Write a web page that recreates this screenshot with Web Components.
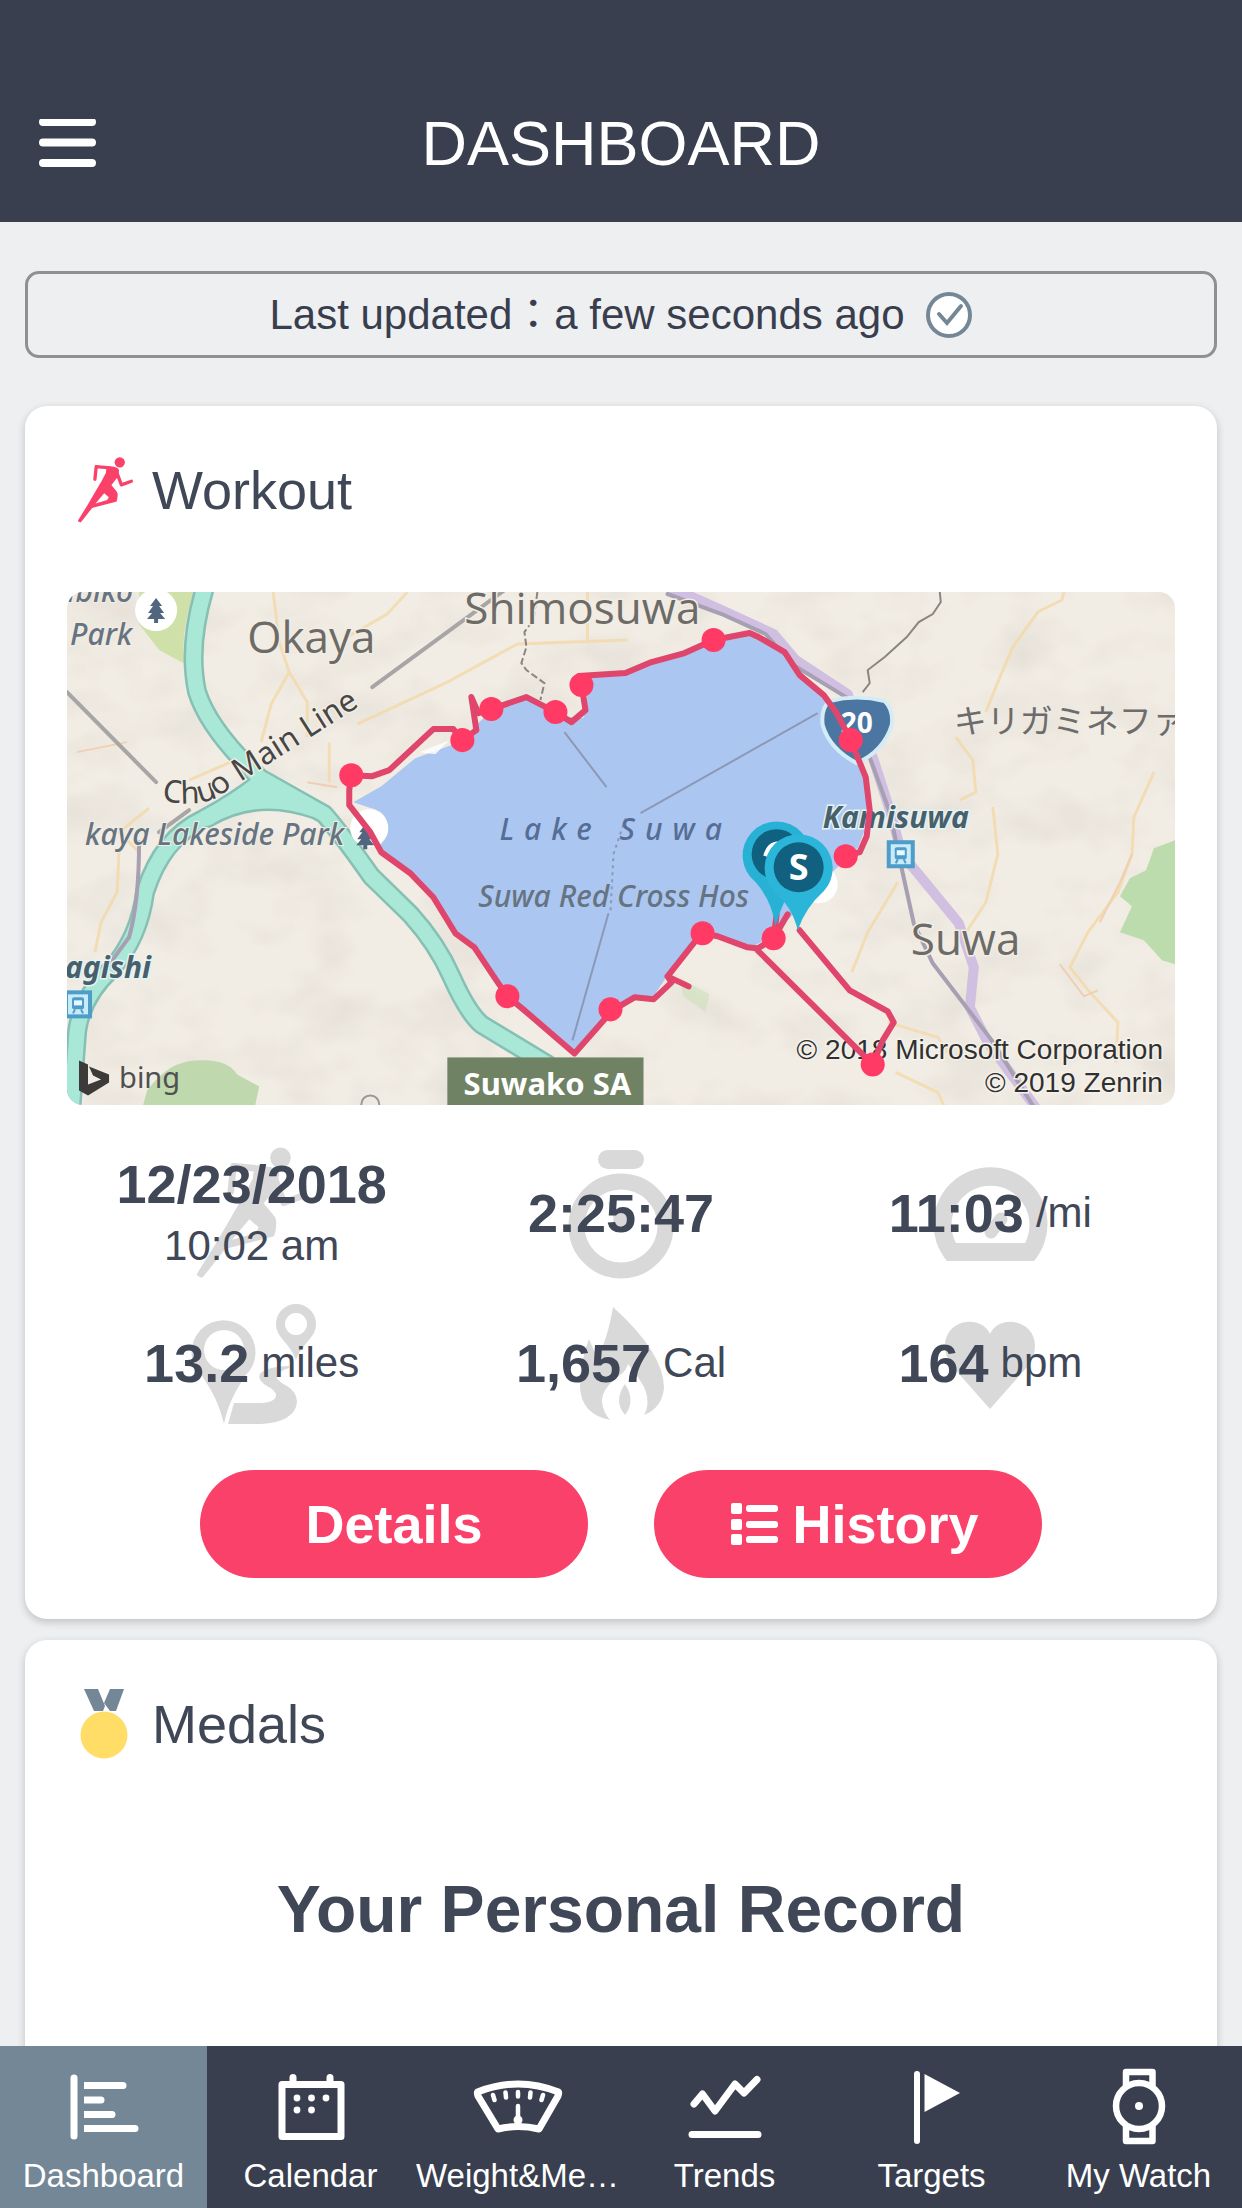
<!DOCTYPE html>
<html lang="en">
<head>
<meta charset="utf-8">
<meta name="viewport" content="width=device-width, initial-scale=1">
<title>Dashboard</title>
<style>
  body {
    margin: 0;
    background: #eeeff1;
    color: #404757;
    font-family: "Liberation Sans", "Noto Sans CJK JP", sans-serif;
  }
</style>
</head>
<body>
<dash-app>
  <dash-header slot="header">DASHBOARD</dash-header>
  <sync-status>Last updated：a few seconds ago</sync-status>
  <dash-card>
    <dash-icon slot="icon" name="runner"></dash-icon>
    <span slot="title">Workout</span>
    <route-map></route-map>
    <stat-grid>
      <stat-cell icon="runner">12/23/2018<span slot="sub">10:02 am</span></stat-cell>
      <stat-cell icon="stopwatch">2:25:47</stat-cell>
      <stat-cell icon="gauge">11:03<span slot="unit">/mi</span></stat-cell>
      <stat-cell icon="route">13.2<span slot="unit">miles</span></stat-cell>
      <stat-cell icon="flame">1,657<span slot="unit">Cal</span></stat-cell>
      <stat-cell icon="heart">164<span slot="unit">bpm</span></stat-cell>
    </stat-grid>
    <button-row>
      <pill-button>Details</pill-button>
      <pill-button icon="list">History</pill-button>
    </button-row>
  </dash-card>
  <dash-card>
    <dash-icon slot="icon" name="medal"></dash-icon>
    <span slot="title">Medals</span>
    <record-heading>Your Personal Record</record-heading>
  </dash-card>
  <tab-bar slot="footer">
    <tab-item icon="dashboard" active>Dashboard</tab-item>
    <tab-item icon="calendar">Calendar</tab-item>
    <tab-item icon="scale">Weight&amp;Me…</tab-item>
    <tab-item icon="trends">Trends</tab-item>
    <tab-item icon="flag">Targets</tab-item>
    <tab-item icon="watch">My Watch</tab-item>
  </tab-bar>
</dash-app>

<script>
const ICONS = {
  runner: ['0 0 172 205', `
    <g fill="currentColor" stroke="currentColor" stroke-linejoin="round" stroke-linecap="round">
      <circle cx="129" cy="19" r="15.5" stroke="none"/>
      <path fill="none" stroke-width="10" d="M54 70 58 32 100 36M118 44 134 87 164 76"/>
      <path stroke-width="6" d="M92 36Q116 32 124 43L120 62 100 88 118 110Q122 116 117 135L44 154 10 197 6 195 34 150 76 78 90 52Z"/>
    </g>
    <path fill="#fff" d="M82 112 96 124 91 133 56 143Z"/>`],
  medal: ['0 0 57 70', `
    <path fill="#738796" d="M7 0H21L28 17 26 22H17ZM33 0H47L39 22H33L27 14Z"/>
    <circle cx="27" cy="46" r="23.5" fill="#ffdd67"/>`],
  stopwatch: ['0 0 150 150', `
    <g fill="currentColor"><rect x="52" y="12" width="46" height="19" rx="9.5"/>
    <circle cx="75" cy="88" r="44.5" fill="none" stroke="currentColor" stroke-width="16"/>
    <circle cx="75" cy="84" r="8"/><path d="M62 64 82 79 71 90Z"/></g>`],
  gauge: ['0 0 150 150', `
    <path fill="currentColor" fill-rule="evenodd" d="M32 123A57 57 0 1 1 119 123ZM41 105H110A39 39 0 1 0 41 105Z"/>
    <path stroke="currentColor" stroke-width="13" stroke-linecap="round" d="M76 94 86 81"/>`],
  route: ['0 0 150 150', `
    <g fill="currentColor"><path fill-rule="evenodd" d="M47 136C42 116 36 104 25 88A32 32 0 1 1 68 88C58 104 51 116 47 136ZM47 42A20 20 0 1 0 47 82A20 20 0 1 0 47 42Z"/>
    <path fill-rule="evenodd" d="M119 72C115 61 108 55 103 48A20 20 0 1 1 135 48C130 55 123 61 119 72ZM119 25A11 11 0 1 0 119 47A11 11 0 1 0 119 25Z"/>
    <path d="M51 136 57 115H84Q99 114 99 107Q98 102 90 98Q80 92 83 86Q88 79 112 78V80Q99 84 100 90Q102 94 110 98Q120 104 120 114Q118 134 84 136Z"/></g>`],
  flame: ['0 0 150 150', `
    <g fill="currentColor"><path d="M67 19Q118 65 118 100Q116 120 98 127Q105 115 98 99Q92 88 82 76Q80 83 74 87Q55 101 56 114Q57 124 64 132Q35 126 34 99Q34 73 43 51Q48 63 51 69Q61 54 67 19Z"/>
    <path d="M79 96Q90 113 79 127Q67 113 79 96Z"/></g>`],
  heart: ['0 0 150 150', `
    <path fill="currentColor" d="M75 121 37 78Q30 68 30 58C30 31 66 26 75 46C84 26 120 31 120 58Q120 68 113 78Z"/>`],
  list: ['0 0 48 44', `
    <g fill="currentColor"><rect width="11" height="11" y="1" rx="2"/><rect width="11" height="11" y="17" rx="2"/><rect width="11" height="11" y="32" rx="2"/>
    <rect x="15" y="3" width="32" height="7" rx="3"/><rect x="15" y="19" width="32" height="7" rx="3"/><rect x="15" y="34" width="32" height="7" rx="3"/></g>`],
  check: ['0 0 48 48', `
    <circle cx="24" cy="24" r="21" fill="#fff" stroke="currentColor" stroke-width="4"/>
    <path fill="none" stroke="currentColor" stroke-width="4" stroke-linecap="round" d="M14 23 22 32 36 15"/>`],
  menu: ['0 0 58 48', `
    <path stroke="currentColor" stroke-width="8" stroke-linecap="round" d="M5 3H54M5 23.500H54M5 44H54"/>`],
  dashboard: ['0 0 100 100', `
    <path fill="none" stroke="currentColor" stroke-width="7" stroke-linecap="round" d="M20 22V80"/>
    <path fill="currentColor" d="M30 26H69a3.500 3.500 0 0 1 0 7H30ZM30 40.500H47a3.500 3.500 0 0 1 0 7H30ZM30 55H58a3.500 3.500 0 0 1 0 7H30ZM30 69H81a3.500 3.500 0 0 1 0 7H30Z"/>`],
  calendar: ['0 0 100 100', `
    <rect x="21" y="28.500" width="59" height="52" fill="none" stroke="currentColor" stroke-width="7" stroke-linejoin="round"/>
    <path stroke="currentColor" stroke-width="7" stroke-linecap="round" d="M32 21.500V27M69 21.500V27"/>
    <g fill="currentColor"><circle cx="36" cy="42" r="3.400"/><circle cx="50.500" cy="42" r="3.400"/><circle cx="65" cy="42" r="3.400"/><circle cx="36" cy="54" r="3.400"/><circle cx="50.500" cy="54" r="3.400"/></g>`],
  scale: ['0 0 100 100', `
    <g fill="none" stroke="currentColor" stroke-linecap="round" stroke-linejoin="round">
    <path stroke-width="7" d="M9.500 36Q50 20 90.500 36Q91 38 90 40L71 73Q50 68 30 73L10 40Q9 38 9.500 36Z"/>
    <path stroke-width="4.500" d="M25 39 26.500 44M37.500 36.500 38 41.500M50 36V40.500M62.500 36.500 62 41.500M75 39 73.500 44M50 50V64"/></g>
    <circle cx="50" cy="64" r="4.500" fill="currentColor"/>`],
  trends: ['0 0 100 100', `
    <path fill="none" stroke="currentColor" stroke-width="7" stroke-linecap="round" stroke-linejoin="round" d="M19 48 27.500 38 40 55 60 28 69 37 82 23.500M17 78.500H83"/>`],
  flag: ['0 0 100 100', `
    <path stroke="currentColor" stroke-width="6" stroke-linecap="round" d="M35 18V85"/>
    <path fill="currentColor" d="M42.500 18 78 37 42.500 56Z"/>`],
  watch: ['0 0 100 100', `
    <g fill="none" stroke="currentColor" stroke-width="6.500"><circle cx="50" cy="50" r="23"/>
    <path stroke-linejoin="round" d="M37 32V16H63.500V32M37 68V85H63.500V68"/></g>
    <circle cx="50" cy="50" r="4" fill="currentColor"/>`]
};

/* Registers an element whose shadow root is filled from render(host). */
const define = (tag, render) => customElements.define(tag, class extends HTMLElement {
  connectedCallback() {
    if (!this.shadowRoot) this.attachShadow({ mode: 'open' }).innerHTML = render(this);
  }
});

define('dash-icon', el => {
  const [box, art] = ICONS[el.getAttribute('name')];
  return `<style>
    :host { display: block; }
    svg { display: block; width: 100%; height: 100%; }
  </style><svg viewBox="${box}" aria-hidden="true">${art}</svg>`;
});

define('dash-app', () => `<style>
    :host { display: flex; flex-direction: column; height: 100vh; }
    main { flex: 1; min-height: 0; overflow-y: auto; scrollbar-width: none; display: flex; flex-direction: column; padding: 49px 25px 0; }
  </style>
  <slot name="header"></slot><main><slot></slot></main><slot name="footer"></slot>`);

define('dash-header', () => `<style>
    :host { display: block; background: #393f4f; color: #fff; }
    header { display: grid; grid-template-columns: 1fr auto 1fr; align-items: center; height: 102px; padding: 92px 38px 28px; }
    button { justify-self: start; padding: 0; border: 0; background: none; color: inherit; }
    dash-icon { width: 58px; height: 48px; }
    h1 { margin: 0; font-size: 63px; line-height: 72px; font-weight: 400; }
  </style>
  <header><button type="button" aria-label="Menu"><dash-icon name="menu"></dash-icon></button><h1><slot></slot></h1></header>`);

define('sync-status', () => `<style>
    :host { display: flex; flex: none; align-items: center; justify-content: center; gap: 20px; box-sizing: border-box;
      height: 87px; margin-bottom: 48px; border: 3px solid #8f9092; border-radius: 14px; color: #393e4e; font-size: 42px; line-height: 48px; }
    dash-icon { width: 48px; height: 48px; color: #738796; }
  </style><span><slot></slot></span><dash-icon name="check"></dash-icon>`);

define('dash-card', () => `<style>
    :host { display: block; flex: none; margin-bottom: 21px; padding: 49px 42px 41px; border-radius: 22px; background: #fff; box-shadow: 0 3px 8px rgba(0,0,0,.2); }
    header { display: flex; align-items: center; gap: 18px; padding-left: 10px; margin-bottom: 67px; }
    ::slotted([slot=icon]) { width: 57px; height: 70px; color: #fa4169; }
    h2 { margin: 0; font-size: 54px; line-height: 62px; font-weight: 400; }
  </style>
  <header><slot name="icon"></slot><h2><slot name="title"></slot></h2></header><slot></slot>`);

define('stat-grid', () => `<style>
    :host { display: grid; grid-template-columns: repeat(3, 1fr); grid-auto-rows: 150px; margin: 33px 0 32px; }
  </style><slot></slot>`);

define('stat-cell', el => `<style>
    :host { display: grid; place-items: center; }
    dash-icon, div { grid-area: 1 / 1; }
    dash-icon { width: 150px; height: 150px; color: #d9d9d9; }
    dash-icon[name=runner] { width: 114px; height: 136px; }
    div { z-index: 1; text-align: center; }
    p { display: flex; align-items: center; justify-content: center; gap: 12px; margin: 0; }
    b { font-size: 54px; line-height: 66px; }
    slot[name] { font-size: 42px; line-height: 58px; }
  </style>
  <dash-icon name="${el.getAttribute('icon')}"></dash-icon>
  <div><p><b><slot></slot></b><slot name="unit"></slot></p><slot name="sub"></slot></div>`);

define('button-row', () => `<style>
    :host { display: flex; justify-content: center; gap: 66px; }
  </style><slot></slot>`);

define('pill-button', el => {
  const icon = el.getAttribute('icon');
  return `<style>
    :host { display: block; width: 388px; }
    button { display: flex; align-items: center; justify-content: center; gap: 13px; width: 100%; height: 108px; padding: 0;
      border: 0; border-radius: 54px; background: #fa4169; color: #fff; font: bold 54px/62px "Liberation Sans", sans-serif; }
    .with-icon { padding-left: 14px; }
    dash-icon { width: 48px; height: 44px; }
  </style>
  <button type="button" class="${icon ? 'with-icon' : ''}">${icon ? `<dash-icon name="${icon}"></dash-icon>` : ''}<span><slot></slot></span></button>`;
});

define('record-heading', () => `<style>
    :host { display: block; margin: -24px 0 240px; padding-top: 68px; text-align: center; }
    h3 { margin: 0; font-size: 66px; line-height: 78px; }
  </style><h3><slot></slot></h3>`);

define('tab-bar', () => `<style>
    :host { display: block; background: #393f4f; }
    nav { display: grid; grid-template-columns: repeat(6, 1fr); }
  </style><nav><slot></slot></nav>`);

define('tab-item', el => `<style>
    :host { display: block; color: #fff; }
    :host([active]) { background: #738796; }
    a { display: flex; flex-direction: column; align-items: center; padding: 10px 0 12px; color: inherit; text-decoration: none; font-size: 33px; line-height: 40px; white-space: nowrap; }
    dash-icon { width: 100px; height: 100px; }
  </style>
  <a href="#"><dash-icon name="${el.getAttribute('icon')}"></dash-icon><span><slot></slot></span></a>`);

define('route-map', () => {
  const stops = [[284,183],[395,148],[424,117],[488,120],[514,93],[646,48],[783,148],[778,264],[706,346],[635,341],[805,472],[543,417],[440,404]];
  const canal = 'M138-5Q120 54 130 100Q142 138 193 186L257 222Q276 244 304 284L343 322Q370 352 384 384Q400 420 414 432L480 472M193 190Q168 210 136 227Q95 246 78 300Q72 345 45 376Q14 405 10 440L4 520M140 226Q190 196 250 218';
  const station = (x, y) => `<g transform="translate(${x} ${y})"><rect x="-12" y="-12" width="24" height="24" fill="#c9ebf8" stroke="#4d9cca" stroke-width="4"/><rect x="-6" y="-7" width="12" height="12" rx="2" fill="#4d9cca"/><rect x="-4" y="-4" width="8" height="5" fill="#e8f8ff"/><path stroke="#4d9cca" stroke-width="2" d="M-5 9-3 5M5 9 3 5"/></g>`;
  const tree = 'M0-12 6-4H3L8 3H4L9 9H2V13H-2V9H-9L-4 3H-8L-3-4H-6Z';
  return `<style>
    :host { display: block; }
    svg { display: block; width: 100%; height: auto; border-radius: 16px; }
    text { font-family: "Noto Sans", "Open Sans", sans-serif; }
    .town { font-family: "Open Sans", sans-serif; font-size: 44px; fill: #6d6b67; stroke: #f2ede4; stroke-width: 3px; paint-order: stroke; }
    .place { font-size: 30px; font-style: italic; font-weight: 500; fill: #667481; stroke: #f2ede4; stroke-width: 2px; paint-order: stroke; }
    .water { font-size: 30px; font-style: italic; font-weight: 500; fill: #566e95; }
    .rail { font-size: 30px; font-style: italic; font-weight: 700; fill: #48606c; stroke: #e6f3f3; stroke-width: 3px; paint-order: stroke; }
    .credit { font-family: "Liberation Sans", sans-serif; font-size: 28px; fill: #303030; stroke: #f4f1ea; stroke-width: 3px; paint-order: stroke; }
  </style>
  <svg viewBox="0 0 1107 513" role="img" aria-label="Workout route around Lake Suwa">
    <defs>
      <filter id="relief" x="0" y="0" width="100%" height="100%">
        <feTurbulence type="fractalNoise" baseFrequency=".014 .02" numOctaves="3" seed="8"/>
        <feColorMatrix values="0 0 0 0 .5  0 0 0 0 .46  0 0 0 0 .42  1.300 0 0 0 -.55"/>
      </filter>
      <path id="chuo" d="M94 208Q138 218 160 198L330 90"/>
    </defs>
    <rect width="1107" height="513" fill="#f2ede4"/>
    <rect width="1107" height="513" filter="url(#relief)" opacity=".35"/>
    <g fill="#c4dfaf">
      <path d="M72 0H128Q112 40 118 72L92 58 72 32Z" fill="#cfe0a8"/>
      <path d="M80 498Q102 468 130 468Q160 466 170 482L192 494 188 513H76Z" fill="#bfd8ad"/>
      <path d="M1107 248 1086 256 1078 278 1062 286 1052 304 1064 314 1052 340 1076 348 1094 368 1107 372Z" fill="#bcdcae"/>
      <path d="M612 386 642 402 638 420 616 404Z" opacity=".5"/>
    </g>
    <g fill="none" stroke="#f3d9a9" stroke-width="3" opacity=".8">
      <path d="M206 0 212 50 222 80 204 112 194 150M222 80 240 110 240 145M340 0 320 22 280 45M290 132 380 90 450 52 560 48M262 150 262 190M122 188 168 168M72 260 52 240 82 216M520 0 520 50M52 258 50 300 34 330 28 360"/>
      <path d="M996 0 994 8 970 20 945 55 930 90 918 120M888 145 905 168 908 200 892 208M925 215 930 262 918 310 895 345M830 290 800 340 784 380M1086 180 1066 225 1064 262 1050 300 1020 340 1002 375 1022 400 1050 430 1048 470M820 430 870 445 880 460M828 480 870 500 876 513"/>
      <path stroke="#f1c8a8" stroke-width="2" d="M992 372 1016 404 1030 398M1064 262 1052 290 1032 330M10 160 60 150M240 190 270 195"/>
    </g>
    <g fill="none" stroke-linejoin="round" stroke-linecap="round">
      <path stroke="#86c0b4" stroke-width="20" d="${canal}"/>
      <path stroke="#a9e8d7" stroke-width="15" d="${canal}"/>
      <path fill="#a9e8d7" d="M186 192H202L230 212H160Z"/>
      <path stroke="#d0bfe0" stroke-width="10" d="M604-4 654 18 706 42 728 68 780 102 806 168 824 224 834 262 850 281 891 331 906 375 902 415 920 450 970 518"/>
      <path stroke="#a79fb2" stroke-width="4" d="M600 2 654 22 698 42 724 72 780 106 802 165 822 220 835 281 846 331 865 371 924 448 965 513M72 250Q72 310 62 345L40 375"/>
      <path stroke="#a7a5a5" stroke-width="4" d="M0 100 89 190M92 240 122 218M305 95 440-4"/>
    </g>
    <path fill="#abc6f1" d="M286 210 314 194 348 166 392 150 420 122 459 106 490 124 516 126 522 84 560 80 617 61 650 48 682 42 692 46 722 68 756 103 782 148 797 185 800 230 790 256 752 292 722 326 704 344 686 354 650 344 632 343 598 386 584 407 563 406 543 417 507 460 442 404 407 354 388 340 366 304 343 280 312 256Q330 222 304 216Z"/>
    <g fill="none" stroke="#8c99b5" stroke-width="2">
      <path d="M497 140 539 195M750 121 573 221M541 321 505 448"/>
      <path stroke="#8b8581" stroke-dasharray="7 3" d="M470 0 466 28 457 40 459 55 454 71 459 78 477 91 473 108"/>
      <path stroke-dasharray="3 4" d="M558 226 546 262 543 320"/>
      <path stroke="#8b8581" d="M872 0 873 10 865 22 851 30 839 45 817 65 800 78 802 91 795 100"/>
      <circle cx="303" cy="512" r="9" stroke="#999"/>
    </g>
    <g fill="#fff">
      <circle cx="89" cy="18" r="21"/><circle cx="302" cy="236" r="19"/><circle cx="751" cy="292" r="19"/>
      <path d="M352 160 382 148 368 162Z" opacity=".8"/>
    </g>
    <path fill="#52657f" transform="translate(89 18)" d="${tree}"/>
    <path fill="#52657f" transform="translate(298 244)" d="${tree}"/>
    <text class="place" x="66" y="10" text-anchor="end">.ubiko</text>
    <text class="place" x="3" y="53">Park</text>
    <text class="town" x="180" y="61">Okaya</text>
    <text class="town" x="397" y="32">Shimosuwa</text>
    <text class="town" x="843" y="363">Suwa</text>
    <text font-size="31" fill="#464646" stroke="#f2ede4" stroke-width="3" paint-order="stroke"><textPath href="#chuo">Chuo Main Line</textPath></text>
    <text class="place" x="277" y="253" text-anchor="end">kaya Lakeside Park</text>
    <text class="water" x="432" y="248" letter-spacing="10">Lake Suwa</text>
    <text class="place" x="411" y="315" style="stroke:#abc6f1">Suwa Red Cross Hos</text>
    <text class="rail" x="755" y="236">Kamisuwa</text>
    <text class="rail" x="84" y="386" text-anchor="end">agishi</text>
    <text x="886" y="141" font-size="33" fill="#6c6c6c" style="font-family:'Noto Sans CJK JP',sans-serif">キリガミネファ</text>
    ${station(833, 262)}${station(11, 412)}
    <g>
      <path fill="#4c76a2" stroke="#d4edf5" stroke-width="4" d="M762 109Q789 102 817 109Q826 118 824 133Q816 159 789 171Q762 157 755 133Q753 116 762 109Z"/>
      <text x="773" y="141" font-size="28" font-weight="700" fill="#fff">20</text>
    </g>
    <rect x="380" y="465" width="196" height="48" fill="#6f8264"/>
    <text x="480" y="503" text-anchor="middle" font-size="31" font-weight="700" fill="#fff">Suwako SA</text>
    <path fill="#3c3b3a" d="M12 468 21 472V492L34 487 26 483 22 474 42 482V490L21 503 12 498Z"/>
    <text x="52" y="496" font-size="29" fill="#505050">bing</text>
    <text class="credit" x="1095" y="467" text-anchor="end">© 2018 Microsoft Corporation</text>
    <text class="credit" x="1095" y="500" text-anchor="end">© 2019 Zenrin</text>
    <path fill="none" stroke="#e0456b" stroke-width="6" stroke-linejoin="round" stroke-linecap="round" d="M732 338 782 398 820 419 826 430 815 448 805 472 689 357 706 346 720 322M706 346 709 322M689 356 680 355 650 344 635 341 626 351 600 384 621 394M600 384 604 390 586 407 567 405 545 418 507 461 457 418 440 404 429 388 407 355 388 341 366 305 343 281 314 260 303 240 282 213 282 198 284 183 305 184 322 178 366 137 386 137 395 148 409 138 404 105 411 121 424 117 459 105 488 120 504 130 518 118 514 93 511 84 558 81 584 70 617 61 646 48 682 41 691 45 717 60 732 83 756 103 769 121 783 148 798 185 802 218 799 244 792 260 778 264"/>
    <g fill="#ff3b65">${stops.map(([x, y]) => `<circle cx="${x}" cy="${y}" r="12"/>`).join('')}</g>
    <path fill="#27b2d5" d="M708 334Q704 308 688 290A34 34 0 1 1 730 290Q714 308 708 334Z"/>
    <circle cx="709" cy="262" r="25" fill="#10607f"/>
    <path fill="none" stroke="#fff" stroke-width="5" d="M713 252Q702 250 698 264"/>
    <path fill="#2bb5d8" d="M730 338Q725 315 706 299A34 34 0 1 1 756 299Q738 315 730 338Z"/>
    <circle cx="731" cy="275" r="25" fill="#11607f"/>
    <text x="731" y="288" text-anchor="middle" font-size="36" font-weight="700" fill="#fff">S</text>
  </svg>`;
});
</script>
</body>
</html>
